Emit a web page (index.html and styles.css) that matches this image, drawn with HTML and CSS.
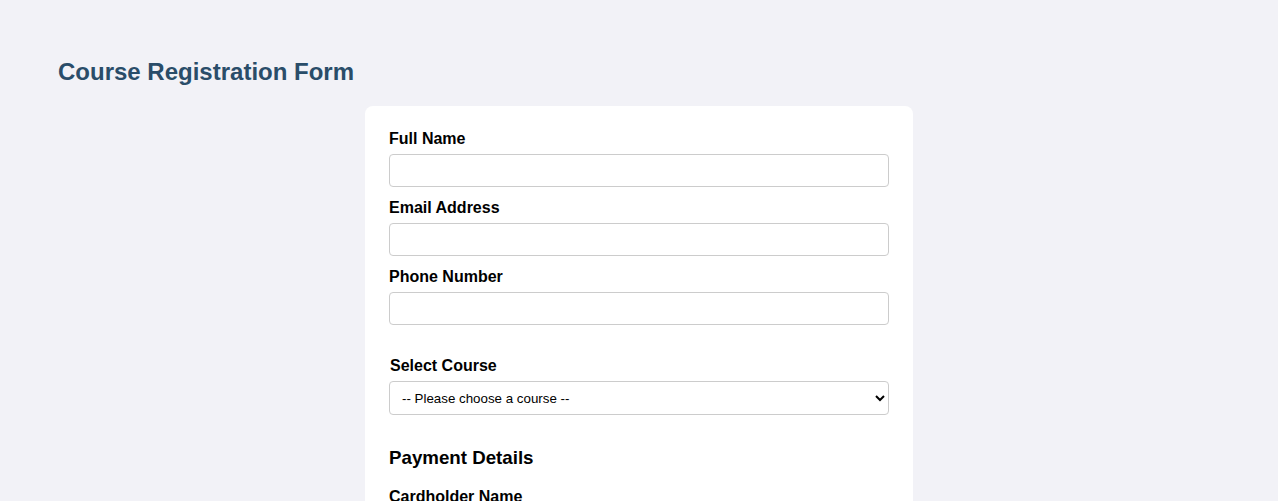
FILE: index.html
```html
<!DOCTYPE html>
<html lang="en">
<head>
    <meta charset="UTF-8">
    <meta name="viewport" content="width=device-width, initial-scale=1.0">
    <title>Course Registration Form</title>
    <link rel="stylesheet" href="styles.css">
</head>
<body>

    <h2>Course Registration Form</h2>

    <form class="form-card">
        <label for="fullName">Full Name</label>
        <input type="text" id="fullName">

        <label for="email">Email Address</label>
        <input type="email" id="email">

        <label for="phone">Phone Number</label>
        <input type="tel" id="phone">

        <div class="course-section">
            <label for="course">Select Course</label>
            <select id="course">
                <option value="">-- Please choose a course --</option>
                <option value="web">Web Development</option>
                <option value="data">Data Science</option>
                <option value="design">UI/UX Design</option>
            </select>
        </div>

        <h3>Payment Details</h3>

        <label for="cardName">Cardholder Name</label>
        <input type="text" id="cardName">

        <label for="cardNumber">Card Number</label>
        <input type="text" id="cardNumber">

        <label for="expiry">Expiry Date</label>
        <input type="text" id="expiry" placeholder="MM/YY">

        <label for="cvv">CVV</label>
        <input type="text" id="cvv">

        <button type="submit">Register</button>
    </form>

</body>
</html>
```

FILE: styles.css
```css
body {
    font-family: Arial, "Liberation Sans", sans-serif;
    background-color: #f2f2f7;
    padding: 30px 50px;
}
h2 {
    color: #2a4d69;
    font-size: 24px;
}
.form-card {
    background-color: #fff;
    max-width: 500px;
    margin: 0 auto;
    padding: 24px;
    border-radius: 8px;
}
.form-card label {
    display: block;
    font-weight: bold;
    font-size: 16px;
    margin-bottom: 6px;
}
.form-card input,
.form-card select {
    display: block;
    width: 100%;
    box-sizing: border-box;
    padding: 8px;
    border: 1px solid #ccc;
    border-radius: 4px;
    font-family: Arial, "Liberation Sans", sans-serif;
    font-size: 13.33px;
    margin-bottom: 12px;
}
.course-section {
    margin-top: 32px;
}
.course-section label {
    padding-left: 1px;
    margin-bottom: 6px;
}
.course-section select {
    height: 34px;
    background-color: #fff;
    margin-bottom: 0;
}
h3 {
    font-size: 18.72px;
    margin: 32px 0 19px;
}
button {
    margin-top: 10px;
    padding: 10px 20px;
    background-color: #2a4d69;
    color: #fff;
    border: none;
    border-radius: 4px;
    cursor: pointer;
}
```
